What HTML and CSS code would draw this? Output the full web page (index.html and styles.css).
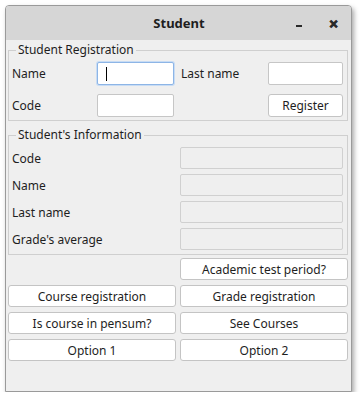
FILE: index.html
```html
<!DOCTYPE html>
<html lang="en">
<head>
    <meta charset="UTF-8">
    <title>Student</title>
    <link rel="stylesheet" href="styles.css">
</head>
<body>
    <div class="window">
        <div class="titlebar">
            <span class="title">Student</span>
            <span class="win-btn minimize"></span>
            <span class="win-btn close">&#x2715;</span>
        </div>
        <div class="content">
            <fieldset class="group">
                <legend>Student Registration</legend>
                <div class="reg-grid">
                    <label>Name</label>
                    <div class="field focused"><span class="caret"></span></div>
                    <label class="second">Last name</label>
                    <div class="field"></div>
                    <label>Code</label>
                    <div class="field"></div>
                    <span></span>
                    <button class="btn">Register</button>
                </div>
            </fieldset>
            <fieldset class="group info">
                <legend>Student's Information</legend>
                <div class="info-grid">
                    <label>Code</label>
                    <div class="field disabled"></div>
                    <label>Name</label>
                    <div class="field disabled"></div>
                    <label>Last name</label>
                    <div class="field disabled"></div>
                    <label>Grade's average</label>
                    <div class="field disabled"></div>
                </div>
            </fieldset>
            <div class="actions">
                <span></span>
                <button class="btn">Academic test period?</button>
                <button class="btn">Course registration</button>
                <button class="btn">Grade registration</button>
                <button class="btn">Is course in pensum?</button>
                <button class="btn">See Courses</button>
                <button class="btn">Option 1</button>
                <button class="btn">Option 2</button>
            </div>
        </div>
    </div>
</body>
</html>
```

FILE: styles.css
```css
body {
    margin: 0;
    padding: 5px 0 0 5px;
    background-color: #ffffff;
    font-family: "Noto Sans", sans-serif;
    font-size: 12px;
    color: #1e1e1e;
}
.window {
    width: 345px;
    height: 385px;
    border: 1px solid #9a9a9a;
    border-radius: 4px 4px 0 0;
    background-color: #efefef;
    box-shadow: 2px 3px 5px rgba(0, 0, 0, 0.35);
    display: flex;
    flex-direction: column;
    overflow: hidden;
}
.titlebar {
    height: 34px;
    background-color: #d6d6d6;
    display: flex;
    align-items: center;
    position: relative;
}
.title {
    flex: 1;
    text-align: center;
    font-weight: bold;
    font-size: 13px;
    padding-left: 1px;
}
.win-btn {
    position: absolute;
    top: 0;
    height: 34px;
    display: flex;
    align-items: center;
    justify-content: center;
    font-weight: bold;
    color: #2a2a2a;
}
.minimize {
    left: 289px;
    width: 8px;
}
.minimize::after {
    content: "";
    width: 6px;
    height: 2px;
    margin-top: 5px;
    background-color: #2a2a2a;
}
.close {
    left: 321px;
    width: 12px;
    font-size: 11px;
    -webkit-text-stroke: 1px #2a2a2a;
}
.content {
    padding: 1px 3px 0 2px;
    display: flex;
    flex-direction: column;
}
.group {
    margin: 0;
    padding: 0 4px 3px 3px;
    border: 1px solid #cfcfcf;
    min-width: 0;
}
.group legend {
    margin-left: 4px;
    padding: 0 2px;
    font-size: 12px;
    line-height: 18px;
}
.group.info {
    margin-top: 5px;
}
label {
    display: flex;
    align-items: center;
}
.field {
    background-color: #ffffff;
    border: 1px solid #c6c6c6;
    border-radius: 2px;
    position: relative;
}
.field.focused {
    border-color: #8db5e6;
    box-shadow: 0 0 0 1px #c8dcf4;
}
.field.disabled {
    background-color: #efefef;
    border-color: #d0d0d0;
}
.caret {
    position: absolute;
    left: 8px;
    top: 4px;
    width: 1px;
    height: 14px;
    background-color: #000000;
}
.reg-grid {
    display: grid;
    grid-template-columns: 85px 77px 94px 75px;
    grid-template-rows: 23px 23px;
    row-gap: 9px;
    padding-top: 3px;
}
.reg-grid .second {
    padding-left: 7px;
}
.info-grid {
    display: grid;
    grid-template-columns: 168px 163px;
    grid-template-rows: repeat(4, 22px);
    row-gap: 5px;
    padding-top: 3px;
    padding-bottom: 1px;
}
.btn {
    font-family: "Noto Sans", sans-serif;
    font-size: 12px;
    color: #1e1e1e;
    background-color: #ffffff;
    border: 1px solid #c4c4c4;
    border-radius: 3px;
    padding: 0;
    margin: 0;
}
.actions {
    display: grid;
    grid-template-columns: 168px 168px;
    grid-template-rows: repeat(4, 22px);
    column-gap: 4px;
    row-gap: 5px;
    margin-top: 3px;
}
```
